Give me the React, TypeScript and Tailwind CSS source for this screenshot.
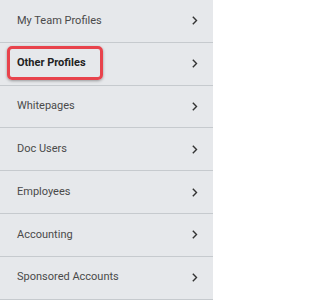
const items = [
  'My Team Profiles',
  'Other Profiles',
  'Whitepages',
  'Doc Users',
  'Employees',
  'Accounting',
  'Sponsored Accounts',
]

function Chevron() {
  return (
    <svg width="6" height="9" viewBox="0 0 6 9" fill="none" className="shrink-0">
      <path d="M1.3 1.2 L4.5 4.5 L1.3 7.8" stroke="#333" strokeWidth="1.4" strokeLinecap="square" />
    </svg>
  )
}

export default function App() {
  return (
    <div className="w-[213px] h-[300px] overflow-hidden bg-[#e6e8eb] font-['Roboto',sans-serif]">
      {items.map((label, i) => (
        <div key={label} className="h-[42.8px] border-b-[1.5px] border-[#c6cace] flex items-center justify-between pl-[17px] pr-[15px]">
          {i === 1 ? (
            <span className="relative text-[11px] font-bold text-[#222]">
              {label}
              <span className="absolute -left-[10px] -right-[17px] -top-[9px] -bottom-[8px] border-[3px] border-[#e8434c] rounded-[5px] shadow-[0_1px_3px_rgba(0,0,0,0.35)]" />
            </span>
          ) : (
            <span className="text-[11px] text-[#4a4a4a]">{label}</span>
          )}
          <Chevron />
        </div>
      ))}
    </div>
  )
}
